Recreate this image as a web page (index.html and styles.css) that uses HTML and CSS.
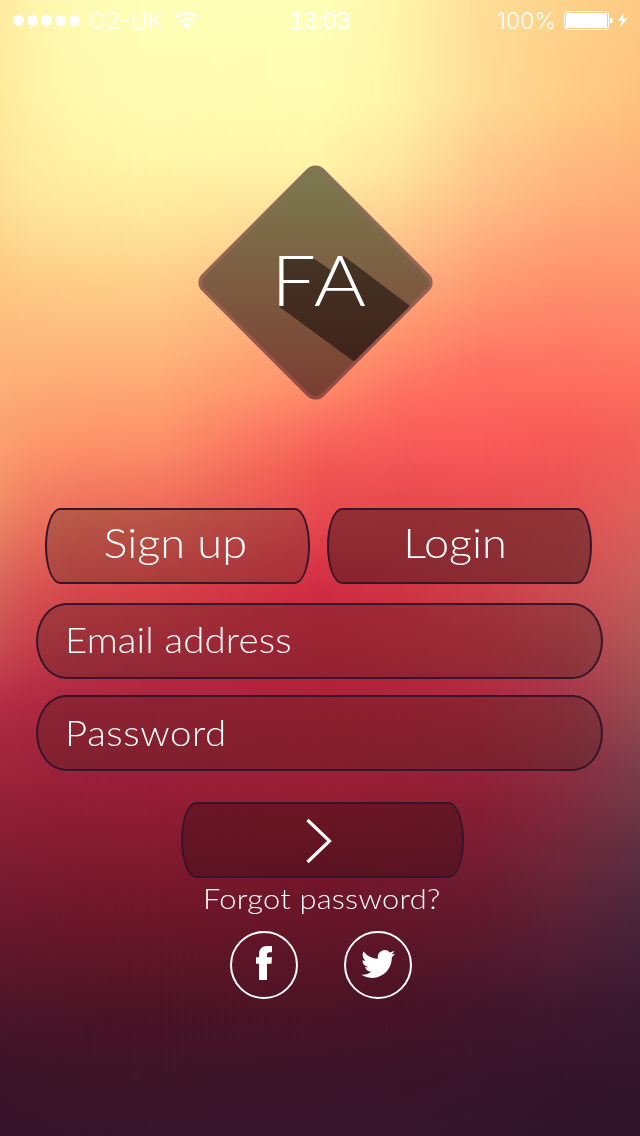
FILE: index.html
```html
<!DOCTYPE html>
<html lang="en">
<head>
<meta charset="utf-8">
<title>FA</title>
<link rel="stylesheet" href="styles.css">
</head>
<body>
<div class="backdrop">
  <div class="wash wash-1"></div>
  <div class="wash wash-2"></div>
  <div class="wash wash-3"></div>
  <div class="wash wash-4"></div>
  <div class="wash wash-5"></div>
  <div class="wash wash-6"></div>
  <div class="wash wash-7"></div>
</div>
<main class="screen">
  <header class="status">
    <div class="status-left">
      <div class="signal"><i></i><i></i><i></i><i></i><i></i></div>
      <span class="carrier">O2-UK</span>
      <svg class="wifi" width="24" height="18" viewBox="0 0 24 18">
        <path d="M1.200 5.800a15.500 15.500 0 0 1 21.600 0M5.200 10a9.800 9.800 0 0 1 13.600 0" fill="none" stroke="#fff" stroke-width="2.600"/>
        <path d="M7.600 12.800a6.300 6.300 0 0 1 8.800 0L12 17.200z" fill="#fff"/>
      </svg>
    </div>
    <span class="clock">13:03</span>
    <div class="status-right">
      <span class="percent">100%</span>
      <svg class="battery" width="64" height="20" viewBox="0 0 64 20">
        <rect x=".5" y=".5" width="44" height="18" rx="3" fill="none" stroke="#fff"/>
        <rect x="2" y="2" width="41" height="15" rx="1.500" fill="#fff"/>
        <path d="M46 6.500q3 .8 3 3t-3 3z" fill="#fff"/>
        <path d="M60 1.500L54 10h4l-2 6.500L63.500 7.500H59z" fill="#fff"/>
      </svg>
    </div>
  </header>

  <div class="logo">
    <svg class="diamond" width="235" height="235" viewBox="-117.500 -117.500 235 235">
      <defs>
        <linearGradient id="face" x1="0" y1="0" x2="1" y2="1">
          <stop offset="0" stop-color="#7b7a50"/>
          <stop offset=".2" stop-color="#7b7049"/>
          <stop offset=".5" stop-color="#7d5c41"/>
          <stop offset=".8" stop-color="#7c4937"/>
          <stop offset="1" stop-color="#783b30"/>
        </linearGradient>
        <linearGradient id="edge" x1="0" y1="0" x2="1" y2="1">
          <stop offset="0" stop-color="#85725a"/>
          <stop offset=".5" stop-color="#976354"/>
          <stop offset="1" stop-color="#944743"/>
        </linearGradient>
        <linearGradient id="cast" x1="0" y1="0" x2="0" y2="1">
          <stop offset="0" stop-color="#443424"/>
          <stop offset="1" stop-color="#40231b"/>
        </linearGradient>
      </defs>
      <rect x="-84.500" y="-84.500" width="169" height="169" rx="10" transform="rotate(45)" fill="url(#face)" stroke="url(#edge)" stroke-width="3.500"/>
      <path d="M-36-25H-3L17-11L27-26H29L94.500 23.500L38.500 79L-36 24.500z" fill="url(#cast)"/>
    </svg>
    <span class="monogram">FA</span>
  </div>

  <div class="tabs">
    <div class="button signup"><span class="label">Sign up</span></div>
    <div class="button login"><span class="label">Login</span></div>
  </div>
  <div class="field email"><span class="label">Email address</span></div>
  <div class="field password"><span class="label">Password</span></div>
  <div class="button submit">
    <svg width="28" height="46" viewBox="0 0 28 46"><path d="M2.500 2L24.500 23L2.500 44" fill="none" stroke="#fff" stroke-width="3.200"/></svg>
  </div>
  <div class="forgot"><span class="label">Forgot password?</span></div>
  <div class="social">
    <div class="ring">
      <svg width="64" height="64" viewBox="0 0 64 64"><path d="M27 47V30.700H24V24.200H27V21.500Q27 13 35 13H40V19.200H37.500Q35 19.200 35 22V24.200H40L39.500 30.700H35V47z" fill="#fff"/></svg>
    </div>
    <div class="ring">
      <svg width="64" height="64" viewBox="0 0 64 64"><path transform="translate(15.200 14) scale(1.420 1.420)" d="M23.950 4.570a10 10 0 0 1-2.820.77 4.960 4.960 0 0 0 2.160-2.720c-.95.550-2 .950-3.130 1.180a4.920 4.920 0 0 0-8.380 4.480A13.900 13.900 0 0 1 1.640 3.160a4.930 4.930 0 0 0 1.520 6.570 4.900 4.900 0 0 1-2.230-.61v.06a4.920 4.920 0 0 0 3.950 4.830 5 5 0 0 1-2.210.08 4.940 4.940 0 0 0 4.600 3.420A9.870 9.870 0 0 1 0 19.540a13.900 13.900 0 0 0 7.550 2.210c9.050 0 14-7.500 14-13.980 0-.21 0-.42-.02-.63a9.900 9.900 0 0 0 2.420-2.570z" fill="#fff"/></svg>
    </div>
  </div>
</main>
</body>
</html>
```
FILE: styles.css
```css
* { box-sizing: border-box; }
body {
  margin: 0;
  width: 640px;
  height: 1136px;
  overflow: hidden;
  position: relative;
  background: #a32238;
  color: #fff;
  font-family: Lato, "Open Sans", sans-serif;
  font-weight: 300;
}

/* Vertical colour ramps blended sideways into one another */
.backdrop, .wash { position: absolute; inset: 0; }
.wash-1 { background: linear-gradient(#ffeba0 0, #ffeb9c 100px, #fee096 200px, #fdc482 300px, #fcac76 400px, #fb9c6e 450px, #f28c66 500px, #e0705e 560px, #c84850 650px, #b02c44 710px, #942238 800px, #721a30 900px, #50162a 1000px, #3f1428 1060px, #36142a 1136px); }
.wash-2 {
  background: linear-gradient(#ffffb8 0, #fffcb2 100px, #fff6a8 160px, #feea9e 210px, #fecf8a 280px, #feb67c 350px, #fea270 400px, #fc8c66 450px, #f0705c 500px, #d64048 590px, #b02640 690px, #961e36 790px, #701729 910px, #4c1426 1010px, #3d1526 1080px, #37152c 1136px);
  mask-image: linear-gradient(90deg, transparent 0, rgba(0, 0, 0, .45) 32px, rgba(0, 0, 0, .8) 80px, #000 160px);
}
.wash-3 {
  background: linear-gradient(#ffffb8 0, #fffdb0 100px, #fff2a6 170px, #fdb47c 300px, #ff8a68 390px, #fa6c60 430px, #f05852 470px, #e64850 520px, #d02c42 590px, #b22238 690px, #981e34 790px, #701629 890px, #4e1426 1000px, #3d1428 1070px, #36162e 1136px);
  mask-image: linear-gradient(90deg, transparent 160px, #000 320px);
}
.wash-4 {
  background: linear-gradient(#fff4aa 0, #fff3a8 100px, #ffe49c 170px, #fec088 250px, #ffa074 310px, #ff8468 360px, #fe6c60 400px, #f65a58 450px, #e84a50 500px, #d03444 590px, #b2243a 690px, #941e34 790px, #6e182c 890px, #4a1426 1000px, #3a1428 1080px, #36162d 1136px);
  mask-image: linear-gradient(90deg, transparent 320px, #000 400px);
}
.wash-5 {
  background: linear-gradient(#ffde98 0, #ffdc96 100px, #ffc088 200px, #ff9470 300px, #ff7062 370px, #fa5c5a 440px, #ea4c50 500px, #ce3e4a 590px, #b22a3e 690px, #8e2036 790px, #6a1b30 890px, #45162a 1000px, #38152a 1070px, #33162b 1136px);
  mask-image: linear-gradient(90deg, transparent 400px, #000 480px);
}
.wash-6 {
  background: linear-gradient(#ffd28a 0, #ffce88 100px, #ffb47e 190px, #ff8e6c 290px, #ff6e60 380px, #f85c58 430px, #e85254 500px, #cc4c50 590px, #a83648 690px, #862a3e 790px, #642438 890px, #41192e 1000px, #34142a 1080px, #30152a 1136px);
  mask-image: linear-gradient(90deg, transparent 480px, #000 560px);
}
.wash-7 {
  background: linear-gradient(#fdca82 0, #fdc27e 100px, #feaa76 200px, #fe8c6c 300px, #fc705f 380px, #f05e58 450px, #e0605a 510px, #c45c5a 590px, #a25052 680px, #803e4c 760px, #603042 850px, #4c263a 910px, #3a1a30 1000px, #301528 1100px, #2e1428 1136px);
  mask-image: linear-gradient(90deg, transparent 560px, #000 640px);
}

.screen {
  position: relative;
  height: 1136px;
  display: flex;
  flex-direction: column;
}
.status {
  height: 40px;
  display: grid;
  grid-template-columns: 1fr auto 1fr;
  align-items: center;
  padding: 1px 12px 0 13px;
  font-family: Inter, "Liberation Sans", sans-serif;
  font-weight: 300;
  font-size: 23px;
}
.status-left, .status-right { display: flex; align-items: center; }
.status-right { justify-content: flex-end; gap: 8px; }
.signal { display: flex; gap: 3px; margin-right: 9px; }
.signal i { width: 11px; height: 11px; border-radius: 50%; background: #fff; }
.carrier { margin-right: 12px; }
.clock {
  font-family: "Liberation Sans", Arial, sans-serif;
  font-weight: 400;
  font-size: 24px;
  -webkit-text-stroke: .2px #fff;
}

.logo {
  width: 235px;
  height: 235px;
  margin: 125px 0 0 198px;
  display: grid;
}
.logo > * { grid-area: 1 / 1; }
.monogram {
  padding: 72px 0 0 74px;
  font-size: 70px;
  line-height: 84px;
  letter-spacing: 2px;
  transform: scaleX(1.14);
  transform-origin: 82px 0;
}

.label {
  display: inline-block;
  white-space: nowrap;
  transform: scaleX(1.1);
}
.tabs {
  display: flex;
  gap: 17px;
  margin: 108px 0 0 45px;
}
.button {
  height: 76px;
  border: 2px solid #38152b;
  border-radius: 15px / 38px;
  display: flex;
  align-items: center;
  justify-content: center;
  padding-bottom: 7px;
  font-size: 41px;
}
.signup { width: 265px; padding-right: 4px; background: rgba(70, 40, 30, .3); }
.login { width: 265px; padding-right: 9px; background: rgba(50, 20, 22, .46); }
.field {
  width: 567px;
  height: 76px;
  margin: 19px 0 0 36px;
  padding: 0 0 5px 27px;
  border: 2px solid #38152b;
  border-radius: 30px / 38px;
  background: rgba(65, 30, 25, .3);
  display: flex;
  align-items: center;
  font-size: 35px;
  letter-spacing: .100px;
}
.field .label, .forgot .label { transform-origin: 0 50%; }
.password { margin-top: 16px; padding: 0 0 3px 27px; letter-spacing: .500px; }
.submit {
  width: 283px;
  margin: 31px 0 0 181px;
  padding: 2px 7px 0 0;
  background: rgba(50, 12, 18, .4);
}
.forgot {
  height: 40px;
  line-height: 40px;
  padding-left: 203px;
  font-size: 28px;
  letter-spacing: .200px;
}
.social { display: flex; gap: 46px; margin: 13px 0 0 230px; }
.ring {
  width: 68px;
  height: 68px;
  border: 2px solid #fff;
  border-radius: 50%;
}
.ring svg { display: block; }
```
